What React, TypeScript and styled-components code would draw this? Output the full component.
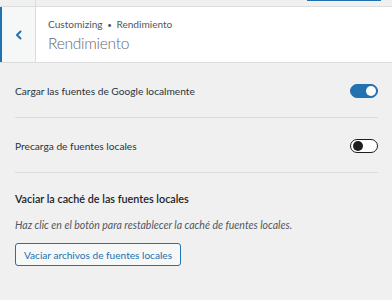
import styled, { createGlobalStyle } from "styled-components";

const Global = createGlobalStyle`
    body {
        margin: 0;
        background: #f0f0f1;
        font-family: Lato, "Noto Sans", sans-serif;
        color: #3c434a;
    }
`

const ChevronLeft = () => (
    <svg width="12" height="12" viewBox="0 0 12 12">
        <path d="M7.5 2.5 L4 6 L7.5 9.5" fill="none" stroke="#2271b1" strokeWidth="2" strokeLinecap="round" strokeLinejoin="round" />
    </svg>
)

const Toggle = ({ on }: { on: boolean }) => (
    <Switch $on={on}>
        <Knob $on={on} />
    </Switch>
)

const App = () => {
    return (
        <Page>
            <Global />
            <TopStrip>
                <StripCell />
                <PublishEdge />
            </TopStrip>
            <Header>
                <BackButton>
                    <ChevronLeft />
                </BackButton>
                <HeaderText>
                    <Crumb>Customizing <Sep>•</Sep> Rendimiento</Crumb>
                    <Title>Rendimiento</Title>
                </HeaderText>
            </Header>
            <Content>
                <Row>
                    <Label>Cargar las fuentes de Google localmente</Label>
                    <Toggle on />
                </Row>
                <Divider />
                <Row>
                    <Label>Precarga de fuentes locales</Label>
                    <Toggle on={false} />
                </Row>
                <Divider />
                <Section>
                    <SectionTitle>Vaciar la caché de las fuentes locales</SectionTitle>
                    <Description>Haz clic en el botón para restablecer la caché de fuentes locales.</Description>
                    <Button>Vaciar archivos de fuentes locales</Button>
                </Section>
            </Content>
        </Page>
    )
}

const Page = styled.div`
    width: 392px;
    height: 300px;
    overflow: hidden;
    background: #f0f0f1;
`

const TopStrip = styled.div`
    height: 6px;
    display: flex;
    justify-content: space-between;
    border-bottom: 1px solid #dcdcde;
`

const StripCell = styled.div`
    width: 35px;
    border-right: 1px solid #dcdcde;
`

const PublishEdge = styled.div`
    width: 74px;
    height: 1px;
    margin-right: 11px;
    background: #2271b1;
`

const Header = styled.div`
    display: flex;
    height: 55px;
    background: #fff;
    border-bottom: 1px solid #dcdcde;
`

const BackButton = styled.div`
    width: 33px;
    display: flex;
    align-items: center;
    justify-content: center;
    background: #f6f7f7;
    border-left: 2px solid #2271b1;
    border-right: 1px solid #dcdcde;
`

const HeaderText = styled.div`
    display: flex;
    flex-direction: column;
    padding: 10px 0 0 12px;
`

const Crumb = styled.div`
    font-size: 10.1px;
    line-height: 14px;
    color: #50575e;
`

const Sep = styled.span`
    font-size: 8px;
    margin: 0 2px;
`

const Title = styled.div`
    margin-top: 1px;
    font-size: 15.6px;
    line-height: 20px;
    letter-spacing: -0.3px;
    font-weight: 300;
    color: #646970;
`

const Content = styled.div`
    padding: 0 14px 0 15px;
`

const Row = styled.div`
    height: 53px;
    display: flex;
    align-items: center;
    justify-content: space-between;
    padding-top: 1px;
`

const Label = styled.div`
    font-size: 10.2px;
    color: #2c3338;
`

const Switch = styled.div<{ $on: boolean }>`
    position: relative;
    width: 28px;
    height: 14px;
    box-sizing: border-box;
    border-radius: 8px;
    background: ${p => (p.$on ? "#2271b1" : "#fff")};
    border: 1px solid ${p => (p.$on ? "#2271b1" : "#1e1e1e")};
`

const Knob = styled.div<{ $on: boolean }>`
    position: absolute;
    top: 1px;
    left: ${p => (p.$on ? "15px" : "2px")};
    width: 10px;
    height: 10px;
    border-radius: 50%;
    background: ${p => (p.$on ? "#fff" : "#1e1e1e")};
`

const Divider = styled.div`
    height: 1px;
    background: #dcdcde;
`

const Section = styled.div`
    display: flex;
    flex-direction: column;
    align-items: flex-start;
    padding-top: 19px;
`

const SectionTitle = styled.div`
    font-size: 10.8px;
    font-weight: 600;
    color: #1d2327;
`

const Description = styled.div`
    margin-top: 14px;
    font-size: 10.5px;
    font-style: italic;
    color: #50575e;
`

const Button = styled.div`
    margin-top: 12px;
    height: 23px;
    box-sizing: border-box;
    padding: 0 8px;
    display: flex;
    align-items: center;
    font-size: 10.1px;
    color: #2271b1;
    background: #f6f7f7;
    border: 1px solid #2271b1;
    border-radius: 3px;
`

export default App;
